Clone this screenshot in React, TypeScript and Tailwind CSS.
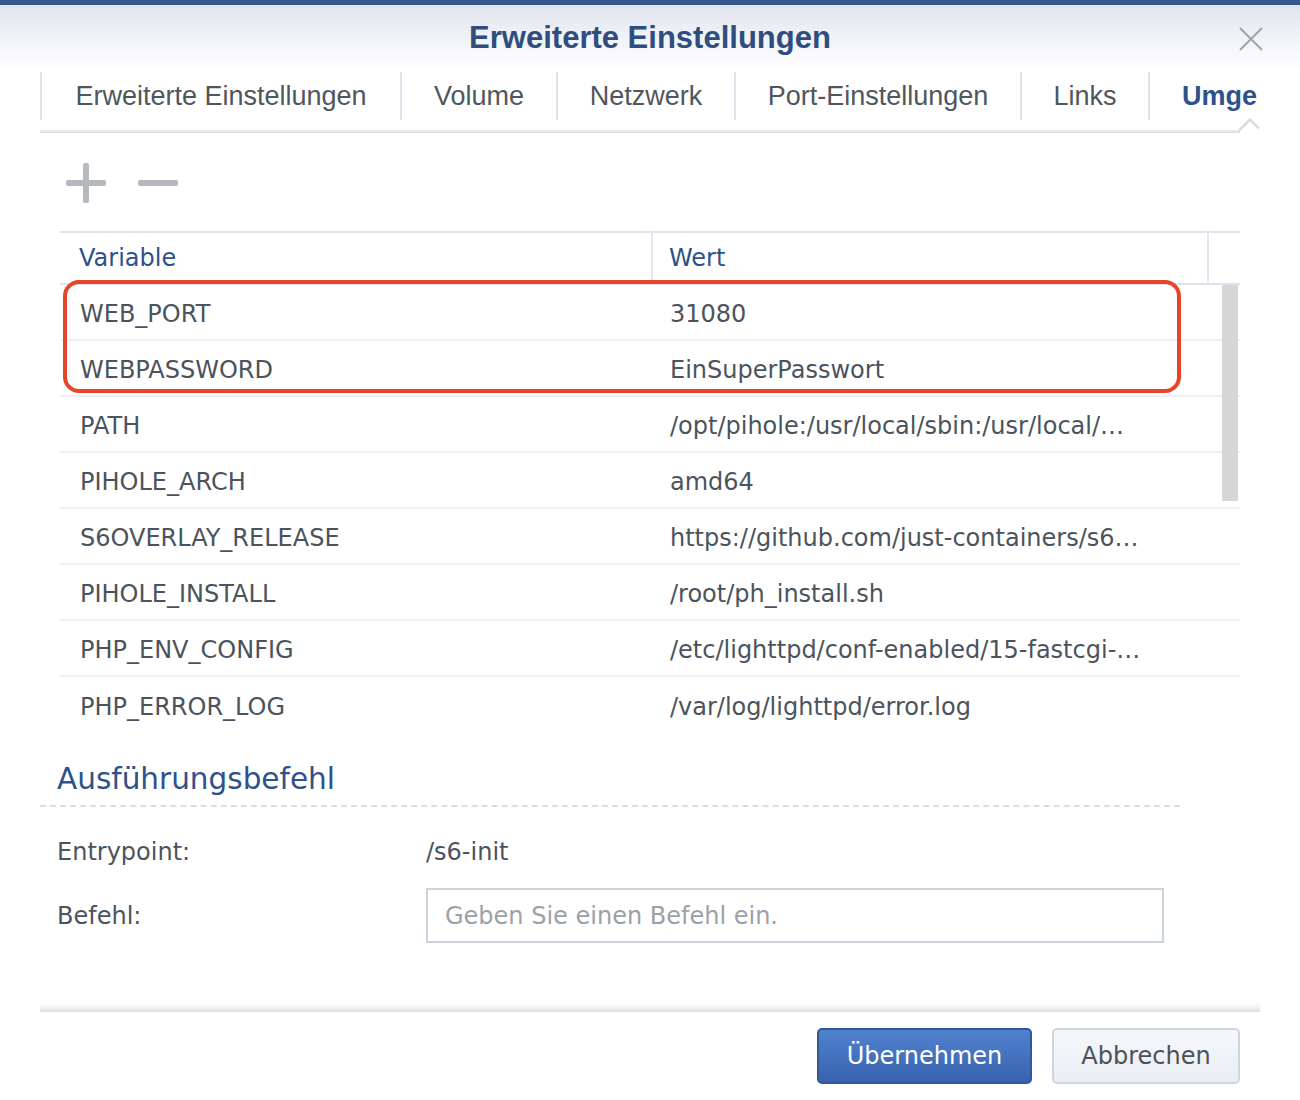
import React from "react";

const ROWS: [string, string][] = [
  ["WEB_PORT", "31080"],
  ["WEBPASSWORD", "EinSuperPasswort"],
  ["PATH", "/opt/pihole:/usr/local/sbin:/usr/local/…"],
  ["PIHOLE_ARCH", "amd64"],
  ["S6OVERLAY_RELEASE", "https://github.com/just-containers/s6…"],
  ["PIHOLE_INSTALL", "/root/ph_install.sh"],
  ["PHP_ENV_CONFIG", "/etc/lighttpd/conf-enabled/15-fastcgi-…"],
  ["PHP_ERROR_LOG", "/var/log/lighttpd/error.log"],
];

const TABS = [
  { label: "Erweiterte Einstellungen", w: "w-[360px]" },
  { label: "Volume", w: "w-[156px]" },
  { label: "Netzwerk", w: "w-[178px]" },
  { label: "Port-Einstellungen", w: "w-[286px]" },
  { label: "Links", w: "w-[128px]" },
];

export default function App() {
  return (
    <div className="relative h-[1100px] w-[1300px] overflow-hidden bg-white font-['DejaVu_Sans',sans-serif] text-[24px] text-[#4b535c]">
      <div className="h-[5px] bg-[#37568a]" />

      {/* header */}
      <div className="relative flex h-[67px] items-center justify-center bg-gradient-to-b from-[#dfe4ec] via-[#f1f3f7] to-white">
        <h1 className="font-['Liberation_Sans',sans-serif] text-[31px] font-bold text-[#2f4e7f]">
          Erweiterte Einstellungen
        </h1>
        <svg
          className="absolute right-[36px] top-[22px]"
          width="26"
          height="24"
          viewBox="0 0 26 24"
        >
          <path d="M2 1 L24 23 M24 1 L2 23" stroke="#9ea4ab" strokeWidth="2" fill="none" />
        </svg>
      </div>

      {/* tabs */}
      <div className="relative mx-[40px] h-[61px]">
        <div className="flex h-[48px] overflow-hidden whitespace-nowrap font-['Liberation_Sans',sans-serif] text-[27px]">
          {TABS.map((t) => (
            <div
              key={t.label}
              className={`${t.w} flex flex-none items-center justify-center border-l-2 border-[#dde3ec] text-[#50565d]`}
            >
              {t.label}
            </div>
          ))}
          <div className="flex flex-none items-center border-l-2 border-[#dde3ec] pl-[32px] font-bold text-[#2f5189]">
            Umge
          </div>
        </div>
        <div className="absolute bottom-0 left-0 h-[3px] w-[1200px] bg-gradient-to-b from-[#eceef1] to-[#d9dce1]" />
        <svg className="absolute bottom-0 right-0" width="22" height="15" viewBox="0 0 22 15">
          <path d="M0 13.5 L12 1.5 L21 10.5" stroke="#d9dce1" strokeWidth="2.5" fill="white" />
        </svg>
      </div>

      {/* content */}
      <div className="px-[40px]">
        <div className="ml-[26px] mt-[30px] flex h-[40px] items-center gap-[32px]">
          <svg width="40" height="40" viewBox="0 0 40 40">
            <rect x="0" y="17" width="40" height="6" rx="2" fill="#b5b9bf" />
            <rect x="17" y="0" width="6" height="40" rx="2" fill="#b5b9bf" />
          </svg>
          <svg width="40" height="40" viewBox="0 0 40 40">
            <rect x="0" y="17" width="40" height="6" rx="2" fill="#b5b9bf" />
          </svg>
        </div>

        <div className="relative ml-[20px] mt-[28px] w-[1180px]">
          <div className="flex h-[54px] border-y-2 border-[#dde4ee] text-[#2f5189]">
            <div className="flex w-[591px] items-center pl-[19px]">Variable</div>
            <div className="flex w-[556px] items-center border-l-2 border-[#e2e7ef] pl-[16px]">Wert</div>
            <div className="flex-1 border-l-2 border-[#e2e7ef]" />
          </div>
          <div className="relative">
            {ROWS.map(([k, v], i) => (
              <div
                key={k}
                className={`flex h-[56px] items-center whitespace-nowrap pt-[3px] ${i < ROWS.length - 1 ? "border-b-2 border-[#eceff3]" : ""}`}
              >
                <div className="w-[591px] pl-[20px]">{k}</div>
                <div className="w-[540px] overflow-hidden pl-[19px]">{v}</div>
              </div>
            ))}
            <div className="absolute right-[2px] top-[0px] h-[216px] w-[16px] bg-[#d5d6d8]" />
          </div>
          <div className="absolute left-[3px] top-[49px] h-[113px] w-[1118px] rounded-[16px] border-4 border-[#e8442a]" />
        </div>

        <div className="mt-[26px] h-[48px] w-[1140px] border-b-2 border-dashed border-[#d6dee9]">
          <div className="pl-[17px] text-[29.5px] leading-[40px] text-[#2f5189]">Ausführungsbefehl</div>
        </div>

        <div className="mt-[17px] flex h-[56px] items-center pl-[17px]">
          <div className="w-[369px]">Entrypoint:</div>
          <div>/s6-init</div>
        </div>
        <div className="mt-[8px] flex h-[55px] items-center pl-[17px]">
          <div className="w-[369px]">Befehl:</div>
          <div className="flex h-[55px] w-[738px] items-center border-2 border-[#cbd3dd] pl-[17px] text-[#9aa1a9]">
            Geben Sie einen Befehl ein.
          </div>
        </div>

        <div className="mt-[60px] h-[9px] bg-gradient-to-b from-white via-[#f2f3f5] to-[#dcdee2]" />

        <div className="mt-[16px] flex justify-end gap-[20px] pr-[20px]">
          <button className="h-[56px] w-[215px] rounded-[5px] border-2 border-[#30599d] bg-gradient-to-b from-[#5082cf] to-[#3862ae] text-white">
            Übernehmen
          </button>
          <button className="h-[56px] w-[188px] rounded-[5px] border-2 border-[#cdd5df] bg-gradient-to-b from-[#f5f7fa] to-[#e9eef4] text-[#4b5158]">
            Abbrechen
          </button>
        </div>
      </div>
    </div>
  );
}
